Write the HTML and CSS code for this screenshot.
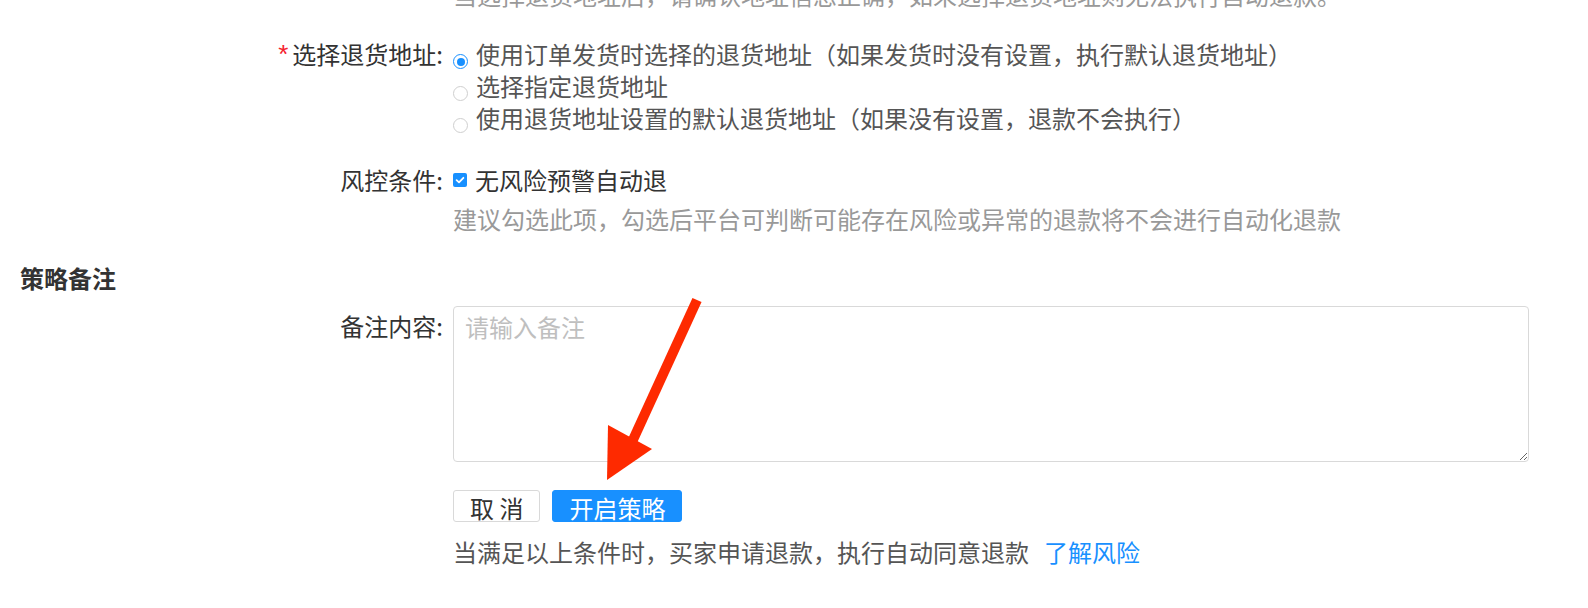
FILE: index.html
```html
<!DOCTYPE html>
<html lang="zh-CN">
<head>
<meta charset="utf-8">
<title>退款策略</title>
<link rel="stylesheet" href="styles.css">
</head>
<body>
<div class="page">
  <p class="top-note">当选择退货地址后，请确认地址信息正确，如未选择退货地址则无法执行自动退款。</p>

  <div class="form-item item-address">
    <div class="label"><span class="req">*</span>选择退货地址:</div>
    <div class="control">
      <label class="choice-row"><span class="radio checked"></span><span class="opt">使用订单发货时选择的退货地址（如果发货时没有设置，执行默认退货地址）</span></label>
      <label class="choice-row"><span class="radio"></span><span class="opt">选择指定退货地址</span></label>
      <label class="choice-row"><span class="radio"></span><span class="opt">使用退货地址设置的默认退货地址（如果没有设置，退款不会执行）</span></label>
    </div>
  </div>

  <div class="form-item item-risk">
    <div class="label">风控条件:</div>
    <div class="control">
      <label class="choice-row check-row"><span class="checkbox"><svg viewBox="0 0 14 14" width="14" height="14"><path d="M3.6 7.2 L6 9.4 L10.4 4.8" fill="none" stroke="#fff" stroke-width="1.8" stroke-linecap="round" stroke-linejoin="round"/></svg></span><span class="opt dark">无风险预警自动退</span></label>
      <div class="hint">建议勾选此项，勾选后平台可判断可能存在风险或异常的退款将不会进行自动化退款</div>
    </div>
  </div>

  <h2 class="section-title">策略备注</h2>

  <div class="form-item item-remark">
    <div class="label">备注内容:</div>
    <div class="control">
      <textarea class="remark" placeholder="请输入备注"></textarea>
      <div class="actions">
        <button class="btn btn-default">取 消</button>
        <button class="btn btn-primary">开启策略</button>
      </div>
      <div class="footnote">当满足以上条件时，买家申请退款，执行自动同意退款<a class="link" href="#">了解风险</a></div>
    </div>
  </div>

  <svg class="annotation" viewBox="0 0 1588 608" width="1588" height="608">
    <line x1="697" y1="300" x2="632" y2="442" stroke="#fe2a00" stroke-width="10"/>
    <polygon points="607,480 608,425 652,449" fill="#fe2a00"/>
  </svg>
</div>
</body>
</html>
```

FILE: styles.css
```css
html, body {
  margin: 0;
  padding: 0;
  background: #fff;
}

body {
  font-family: "Noto Sans CJK SC", "Noto Sans", sans-serif;
  font-size: 24px;
  color: #333;
  width: 1588px;
  height: 608px;
  overflow: hidden;
}

.page {
  position: relative;
  display: flow-root;
  height: 608px;
}

.top-note {
  margin: -21px 0 0 453px;
  line-height: 32px;
  color: #999;
  white-space: nowrap;
}

.form-item {
  display: flex;
  align-items: flex-start;
}

.label {
  width: 443px;
  flex: none;
  text-align: right;
  line-height: 32px;
  color: #333;
  white-space: nowrap;
}

.req {
  color: #f5222d;
  font-family: "Liberation Sans", sans-serif;
  font-size: 26px;
  margin-right: 4px;
  position: relative;
  top: -1px;
}

.control {
  margin-left: 10px;
  display: flex;
  flex-direction: column;
}

.item-address {
  margin-top: 27px;
}

.choice-row {
  display: flex;
  align-items: flex-start;
  line-height: 32px;
  cursor: pointer;
}

.opt {
  margin-left: 8px;
  color: #555;
  white-space: nowrap;
}

.opt.dark {
  color: #333;
}

.radio {
  flex: none;
  box-sizing: border-box;
  width: 15px;
  height: 15px;
  margin-top: 16px;
  border: 1px solid #cfcfcf;
  border-radius: 50%;
  background: #fff;
  display: flex;
  align-items: center;
  justify-content: center;
}

.radio.checked {
  border-color: #1890ff;
}

.radio.checked::after {
  content: "";
  width: 8px;
  height: 8px;
  border-radius: 50%;
  background: #1890ff;
}

.item-risk {
  margin-top: 30px;
}

.checkbox {
  flex: none;
  width: 14px;
  height: 14px;
  margin-top: 9px;
  border-radius: 2px;
  background: #1890ff;
  display: flex;
}

.hint {
  margin-top: 7px;
  line-height: 32px;
  color: #999;
  white-space: nowrap;
}

.section-title {
  margin: 27px 0 0 20px;
  font-size: 24px;
  font-weight: 700;
  line-height: 32px;
  color: #333;
}

.item-remark {
  margin-top: 12px;
}

.item-remark .label {
  padding-top: 4px;
}

.remark {
  box-sizing: border-box;
  width: 1076px;
  height: 156px;
  margin: 0;
  padding: 4px 11px;
  border: 1px solid #d9d9d9;
  border-radius: 4px;
  font-family: inherit;
  font-size: 24px;
  line-height: 32px;
  color: #333;
  outline: none;
  display: block;
}

.remark::placeholder {
  color: #bfbfbf;
}

.actions {
  display: flex;
  gap: 12px;
  margin-top: 28px;
}

.btn {
  box-sizing: border-box;
  height: 32px;
  margin: 0;
  padding: 5px 16px 1px;
  border: 1px solid #d9d9d9;
  border-radius: 3px;
  font-family: inherit;
  font-size: 24px;
  line-height: 24px;
  cursor: pointer;
}

.btn-default {
  background: #fff;
  color: #333;
}

.btn-primary {
  background: #1890ff;
  border-color: #1890ff;
  color: #fff;
  padding-left: 16px;
  padding-right: 16px;
}

.footnote {
  margin-top: 14px;
  line-height: 32px;
  color: #555;
  white-space: nowrap;
}

.link {
  margin-left: 15px;
  color: #1890ff;
  text-decoration: none;
}

.annotation {
  position: absolute;
  left: 0;
  top: 0;
  pointer-events: none;
}
```
